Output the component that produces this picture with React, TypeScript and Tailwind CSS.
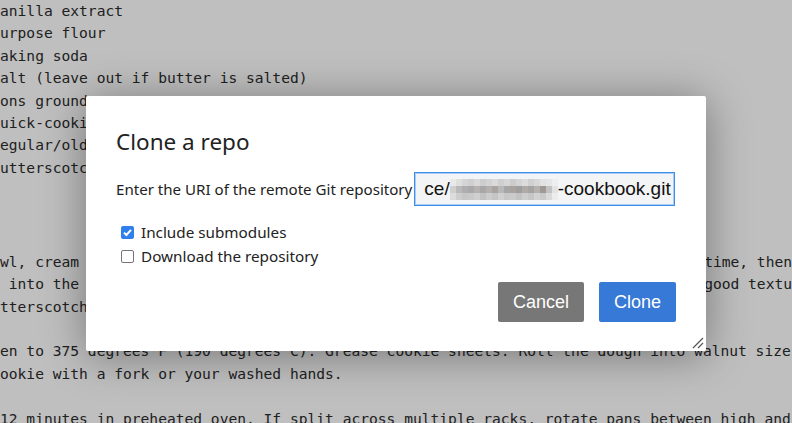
import React from 'react';

const blur: string[][] = [
    ['#e9e9e9', '#dedede', '#d5d5d5', '#cfcfcf', '#d8d8d8', '#cdcdcd', '#d3d3d3', '#dadada', '#cfcfcf', '#d6d6d6', '#cccccc', '#d4d4d4', '#dcdcdc', '#d0d0d0', '#d8d8d8', '#e2e2e2', '#e6e6e6', '#eeeeee'],
    ['#cfcfcf', '#b9b9b9', '#aeaeae', '#a9a9ab', '#b6b2b0', '#a7a7a7', '#b3b0ae', '#a9a4a1', '#b8b8b8', '#a6a6a6', '#a9a29e', '#9e9e9e', '#b0aaa6', '#a4a4a4', '#b5b1ae', '#9f9995', '#c2c2c2', '#e3e3e3'],
    ['#dcdcdc', '#cdcdcd', '#c6c6c6', '#c9c9c9', '#cfcfcf', '#c2c2c2', '#cccccc', '#c5c5c5', '#d0d0d0', '#c8c8c8', '#cbcbcb', '#c3c3c3', '#cecece', '#c6c6c6', '#d2d2d2', '#cacaca', '#d9d9d9', '#ececec'],
];

export default function App() {
    const mono = "font-['DejaVu_Sans_Mono',monospace] text-[14.6px] leading-[22.4px] text-[#2b2b2b] whitespace-pre";

    return (
        <div className="relative w-[792px] h-[423px] overflow-hidden bg-white">
            {/* page behind the dialog, only the parts that show */}
            <div className={mono}>
                <div>anilla extract</div>
                <div>urpose flour</div>
                <div>aking soda</div>
                <div>alt (leave out if butter is salted)</div>
                <div>ons ground</div>
                <div>uick-cooki</div>
                <div>egular/old</div>
                <div>utterscotc</div>

                <div className="mt-[71.6px] flex">
                    <span>wl, cream</span>
                    <span className="ml-auto">time, then</span>
                </div>
                <div className="flex">
                    <span> into the</span>
                    <span className="ml-auto">good textu</span>
                </div>
                <div>tterscotch</div>

                <div className="mt-[22.4px]">en to 375 degrees F (190 degrees C). Grease cookie sheets. Roll the dough into walnut size</div>
                <div>ookie with a fork or your washed hands.</div>

                <div className="mt-[22.4px]">12 minutes in preheated oven. If split across multiple racks, rotate pans between high and</div>
            </div>

            {/* overlay + dialog */}
            <div className="absolute inset-0 bg-black/25 flex justify-center items-start pt-[96px]">
                <div className="relative w-[620px] h-[255px] bg-white rounded-[2px] shadow-[0_4px_44px_rgba(0,0,0,0.38)] px-[30px] pt-[30px] pb-[29px] flex flex-col font-['Noto_Sans',sans-serif] text-[#222]">
                    <h2 className="text-[22.5px] leading-[32px] font-normal">Clone a repo</h2>

                    <div className="mt-[14px] flex items-center">
                        <label className="shrink-0 whitespace-nowrap text-[15.1px] leading-[20px]">Enter the URI of the remote Git repository</label>
                        <div className="ml-[2px] w-[261px] h-[34px] shrink-0 border border-[#3b8eea] shadow-[inset_0_0_0_1px_#a9cdf5] bg-[#f3f4f5] flex items-center pl-[9px] overflow-hidden font-['Liberation_Sans',Arial,sans-serif] text-[19px] text-[#111] whitespace-nowrap">
                            <span>ce/</span>
                            <span className="flex flex-col">
                                {blur.map((row, r) => (
                                    <span key={r} className="flex">
                                        {row.map((c, i) => (
                                            <span key={i} className="w-[6px] h-[7px]" style={{ backgroundColor: c }} />
                                        ))}
                                    </span>
                                ))}
                            </span>
                            <span>-cookbook.git</span>
                        </div>
                    </div>

                    <div className="mt-[14px] flex flex-col text-[15.25px] leading-[24px]">
                        <label className="flex items-center">
                            <span className="ml-[5px] w-[13px] h-[13px] rounded-[2px] bg-[#2f80ed] flex items-center justify-center">
                                <svg width="11" height="11" viewBox="0 0 11 11">
                                    <path d="M2 5.6 L4.4 8 L9 2.8" stroke="white" strokeWidth="2" fill="none" />
                                </svg>
                            </span>
                            <span className="ml-[7px]">Include submodules</span>
                        </label>
                        <label className="flex items-center">
                            <span className="ml-[5px] w-[13px] h-[13px] rounded-[2px] border border-[#767676] bg-white" />
                            <span className="ml-[7px]">Download the repository</span>
                        </label>
                    </div>

                    <div className="mt-auto flex justify-end gap-[15px] font-['Liberation_Sans',Arial,sans-serif] text-[18px] text-white">
                        <button className="h-[40px] px-[15px] rounded-[2px] bg-[#777777]">Cancel</button>
                        <button className="h-[40px] px-[15px] rounded-[2px] bg-[#3679d6]">Clone</button>
                    </div>

                    <svg className="absolute right-[2px] bottom-[2px]" width="12" height="12" viewBox="0 0 12 12">
                        <path d="M1 11 L11 1 M6 11 L11 6" stroke="#555" strokeWidth="1.2" />
                    </svg>
                </div>
            </div>
        </div>
    );
}
